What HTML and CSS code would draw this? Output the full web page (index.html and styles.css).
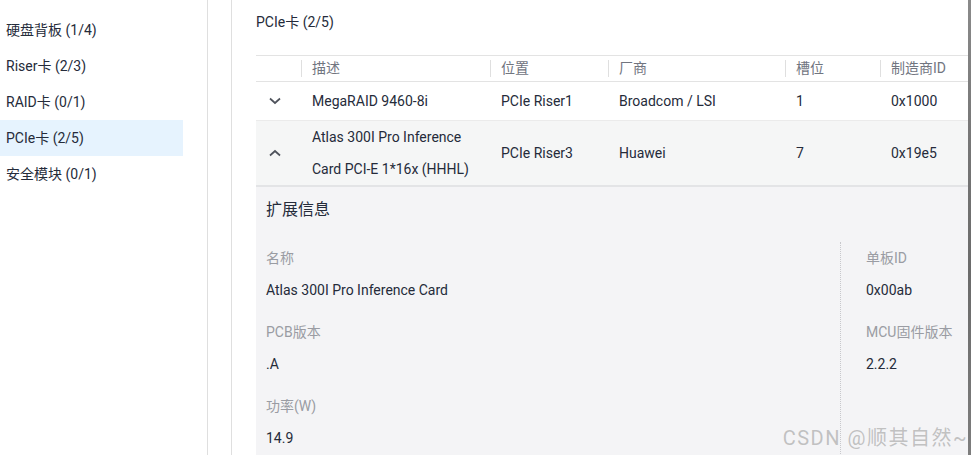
FILE: index.html
```html
<!DOCTYPE html>
<html lang="zh-CN">

<head>
    <meta charset="UTF-8">
    <meta name="viewport" content="width=device-width, initial-scale=1.0">
    <title>PCIe卡</title>
    <link rel="stylesheet" href="styles.css">
</head>

<body>
    <!--左侧菜单-->
    <div class="side">
        <div class="item">硬盘背板 (1/4)</div>
        <div class="item">Riser卡 (2/3)</div>
        <div class="item">RAID卡 (0/1)</div>
        <div class="item active">PCIe卡 (2/5)</div>
        <div class="item">安全模块 (0/1)</div>
    </div>
    <div class="gutter"></div>

    <div class="main">
        <div class="title">PCIe卡 (2/5)</div>
        <table class="grid">
            <colgroup>
                <col class="c0">
                <col class="c1">
                <col class="c2">
                <col class="c3">
                <col class="c4">
                <col class="c5">
            </colgroup>
            <tr class="head">
                <th></th>
                <th><span>描述</span></th>
                <th><span>位置</span></th>
                <th><span>厂商</span></th>
                <th><span>槽位</span></th>
                <th><span>制造商ID</span></th>
            </tr>
            <tr class="row">
                <td class="arrow">
                    <svg width="12" height="8" viewBox="0 0 12 8"><polyline points="1,1.5 6,6 11,1.5" /></svg>
                </td>
                <td>MegaRAID 9460-8i</td>
                <td>PCIe Riser1</td>
                <td>Broadcom / LSI</td>
                <td>1</td>
                <td>0x1000</td>
            </tr>
            <tr class="row open">
                <td class="arrow">
                    <svg width="12" height="8" viewBox="0 0 12 8"><polyline points="1,6.5 6,2 11,6.5" /></svg>
                </td>
                <td class="two">Atlas 300I Pro Inference Card PCI-E 1*16x (HHHL)</td>
                <td>PCIe Riser3</td>
                <td>Huawei</td>
                <td>7</td>
                <td>0x19e5</td>
            </tr>
        </table>

        <!--展开信息-->
        <div class="ext">
            <div class="ext-title">扩展信息</div>
            <div class="ext-body">
                <div class="col left">
                    <div class="field">
                        <div class="label">名称</div>
                        <div class="value">Atlas 300I Pro Inference Card</div>
                    </div>
                    <div class="field">
                        <div class="label">PCB版本</div>
                        <div class="value">.A</div>
                    </div>
                    <div class="field">
                        <div class="label">功率(W)</div>
                        <div class="value">14.9</div>
                    </div>
                </div>
                <div class="col right">
                    <div class="field">
                        <div class="label">单板ID</div>
                        <div class="value">0x00ab</div>
                    </div>
                    <div class="field">
                        <div class="label">MCU固件版本</div>
                        <div class="value">2.2.2</div>
                    </div>
                </div>
            </div>
        </div>
    </div>
    <div class="edge"></div>

    <div class="mark">CSDN @顺其自然~</div>
</body>

</html>
```

FILE: styles.css
```css
html,
body {
    height: 100%;
}

body {
    margin: 0;
    display: flex;
    overflow: hidden;
    background: #fff;
    color: #252b3a;
    font-family: Roboto, "Noto Sans CJK SC", sans-serif;
    font-size: 14px;
}

.side {
    width: 207px;
    padding-top: 12px;
    border-right: 1px solid #dfdfdf;
    flex: none;
}

.item {
    width: 177px;
    height: 36px;
    line-height: 36px;
    padding-left: 6px;
    color: #252b3a;
}

.item.active {
    background-color: #e6f3fe;
}

.gutter {
    width: 23px;
    border-right: 1px solid #dfdfdf;
    flex: none;
}

.main {
    width: 712px;
    padding-left: 24px;
    flex: none;
    display: flex;
    flex-direction: column;
    overflow: hidden;
}

.title {
    flex: none;
    height: 55px;
    line-height: 20px;
    padding-top: 12px;
    box-sizing: border-box;
}

.grid {
    flex: none;
    width: 712px;
    border-collapse: collapse;
    table-layout: fixed;
}

.c0 { width: 45px; }
.c1 { width: 189px; }
.c2 { width: 118px; }
.c3 { width: 177px; }
.c4 { width: 95px; }
.c5 { width: 88px; }

.head th {
    height: 25px;
    padding: 0;
    border-top: 1px solid #e3e3e3;
    border-bottom: 1px solid #e3e3e3;
    font-weight: normal;
    text-align: left;
    color: #71757f;
}

.head th span {
    display: block;
    line-height: 17px;
    padding-left: 10px;
    border-left: 1px solid #dfdfdf;
}

.row td {
    height: 38px;
    padding: 0 0 0 11px;
    border-bottom: 1px solid #ebebeb;
}

.row.open td {
    height: 64px;
    background-color: #f5f6f6;
    border-bottom: 2px solid #e3e4e6;
}

.row td.two {
    line-height: 32px;
}

.arrow {
    text-align: left;
}

.arrow svg {
    display: block;
    margin-left: 2px;
}

.arrow polyline {
    fill: none;
    stroke: #4f535c;
    stroke-width: 1.7;
}

.ext {
    flex: none;
    min-height: 300px;
    background-color: #f4f4f6;
    padding: 11px 0 0 10px;
}

.ext-title {
    font-size: 16px;
    line-height: 24px;
    color: #252b3a;
}

.ext-body {
    display: flex;
    margin-top: 20px;
}

.col.left {
    width: 574px;
    border-right: 1px dotted #c8c8cc;
}

.col.right {
    padding-left: 25px;
}

.field {
    margin-bottom: 10px;
}

.label,
.value {
    line-height: 32px;
}

.label {
    color: #9a9ca3;
}

.edge {
    width: 3px;
    flex: none;
    background: linear-gradient(#8a8a8a, #777 30%, #6b6b6b 60%, #7d7d7d);
}

.mark {
    position: absolute;
    right: 3px;
    bottom: 4px;
    font-size: 20px;
    letter-spacing: 1.5px;
    color: rgba(170, 170, 170, 0.7);
}
```
